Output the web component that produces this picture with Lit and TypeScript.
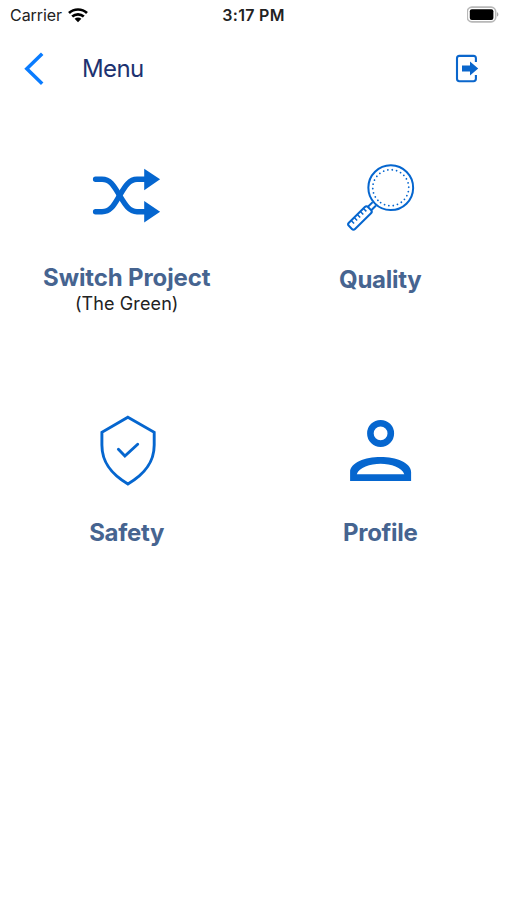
import { LitElement, html, svg, css } from "lit";
import { customElement, property } from "lit/decorators.js";

const icons: Record<string, unknown> = {
  shuffle: svg`
    <g fill="none" stroke="currentColor" stroke-width="5.4" stroke-linecap="round">
      <path d="M8.6 24.3H15C24 24.3 27.5 32 32.6 40.5S42 56.7 50 56.7H58"/>
      <path d="M8.6 56.7H15C24 56.7 27.5 49 32.6 40.5S42 24.3 50 24.3H58"/>
    </g>
    <path fill="currentColor" d="M57.2 13.7L73.1 24.3L57.2 35.3ZM57.2 46L73.1 56.7L57.2 67.5Z"/>`,
  magnifier: svg`
    <g transform="translate(50.75 32.7) rotate(135.5)" fill="none" stroke="currentColor" stroke-width="2">
      <circle r="22.4"/>
      <circle r="18" stroke-width="1.8" stroke-linecap="round" stroke-dasharray="0 4.35"/>
      <path d="M23 -2.4H30M23 2.4H30"/>
      <rect x="29.8" y="-4.4" width="26.8" height="8.8" rx="2.2"/>
      <path stroke-width="1.5" d="M34 4V0.2M38.3 4V0.2M42.6 4V0.2M46.9 4V0.2M51.2 4V0.2"/>
    </g>`,
  shield: svg`
    <g fill="none" stroke="currentColor" stroke-width="2.9" stroke-linecap="round">
      <path d="M40.9 7.2L67.2 22.3V35C67.2 53 57 64.5 40.9 74C24.8 64.5 14.9 53 14.9 35V22.3Z"/>
      <path d="M31.4 39.2L37.9 46L50.7 34.2"/>
    </g>`,
  person: svg`
    <circle cx="40.6" cy="23.4" r="10.2" fill="none" stroke="currentColor" stroke-width="6.6"/>
    <path fill="currentColor" fill-rule="evenodd" d="M10.1 71V62C10.1 52.5 25 46.9 40.6 46.9S71.1 52.5 71.1 62V71ZM16.8 64.2H64.3C62 57.5 51 53.8 40.6 53.8S19 57.5 16.8 64.2Z"/>`,
};

@customElement("status-bar")
class StatusBar extends LitElement {
  static styles = css`
    :host { display: grid; grid-template-columns: 1fr auto 1fr; align-items: center; height: 30px; padding: 0 8px 0 10px; box-sizing: border-box; color: #222; font-size: 16px; line-height: 30px; }
    .left { display: flex; align-items: center; gap: 6px; }
    .carrier { letter-spacing: -0.05px; }
    .time { margin-right: 2px; font-weight: 600; letter-spacing: 0.3px; }
    .battery { justify-self: end; }
    svg { display: block; }
  `;
  render() {
    return html`
      <div class="left">
        <span class="carrier">Carrier</span>
        <svg width="20" height="15" viewBox="0 0 20 15" fill="none" stroke="#000" stroke-width="2.7">
          <path d="M1 5C6 .3 14 .3 19 5M4.2 8.5C7.5 5.6 12.5 5.6 15.8 8.5"/>
          <path fill="#000" stroke="none" d="M6.6 10.8C8.5 9.1 11.5 9.1 13.4 10.8L10 14.2Z"/>
        </svg>
      </div>
      <span class="time">3:17 PM</span>
      <svg class="battery" width="32" height="18" viewBox="0 0 32 18">
        <rect x=".3" y="1.1" width="28.4" height="14.8" rx="4.6" fill="#fff" stroke="#b8b8b8" stroke-width="1.6"/>
        <rect x="2.8" y="3.3" width="23.6" height="10.6" rx="2" fill="#000"/>
        <path d="M30 6.2C31.8 6.8 31.8 10 30 10.6Z" fill="#aaa"/>
      </svg>`;
  }
}

@customElement("nav-header")
class NavHeader extends LitElement {
  static styles = css`
    :host { display: flex; align-items: center; height: 77px; padding: 0 28px 0 22px; box-sizing: border-box; }
    .title { flex: 1; margin-left: 36px; color: #1d3270; font-size: 24px; line-height: 32px; letter-spacing: -0.6px; }
    svg { display: block; }
  `;
  render() {
    return html`
      <svg width="24" height="36" viewBox="0 0 24 36" fill="none" stroke="#0a7cff" stroke-width="3.5">
        <path d="M20.2 2.8L4.8 17.8L20.2 32.8"/>
      </svg>
      <span class="title">Menu</span>
      <svg width="26" height="32" viewBox="0 0 26 32">
        <path fill="none" stroke="#0a66cc" stroke-width="2.1" d="M22.9 8.9V5.3Q22.9 2.9 20.5 2.9H6.4Q4 2.9 4 5.3V25.8Q4 28.2 6.4 28.2H20.5Q22.9 28.2 22.9 25.8V22"/>
        <path fill="#0a66cc" d="M9 12.6H17V8.6L25.2 15.5L17 22.4V18.4H9Z"/>
      </svg>`;
  }
}

@customElement("menu-tile")
class MenuTile extends LitElement {
  @property() icon = "";
  @property() label = "";
  @property() note = "";
  static styles = css`
    :host { display: flex; flex-direction: column; align-items: center; }
    svg { display: block; color: #0566cf; }
    .label { margin-top: var(--label-gap, 30px); color: #466490; font-size: 24px; font-weight: 700; line-height: 30px; letter-spacing: -0.27px; }
    .noted { margin-top: 28px; letter-spacing: -0.12px; }
    .note { margin-top: -1px; color: #222; font-size: 18px; line-height: 24px; letter-spacing: 0.1px; }
  `;
  render() {
    return html`
      <svg width="80" height="80" viewBox="0 0 80 80">${icons[this.icon]}</svg>
      <span class="label ${this.note ? "noted" : ""}">${this.label}</span>
      ${this.note ? html`<span class="note">${this.note}</span>` : ""}`;
  }
}

@customElement("app-root")
class AppRoot extends LitElement {
  static styles = css`
    :host { display: block; height: 900px; background: #fff; font-family: Inter, "Liberation Sans", sans-serif; }
    .grid { display: grid; grid-template-columns: 1fr 1fr; grid-auto-rows: 255px; padding-top: 48px; }
    .low { --label-gap: 28px; }
  `;
  render() {
    return html`
      <status-bar></status-bar>
      <nav-header></nav-header>
      <main class="grid">
        <menu-tile icon="shuffle" label="Switch Project" note="(The Green)"></menu-tile>
        <menu-tile icon="magnifier" label="Quality"></menu-tile>
        <menu-tile class="low" icon="shield" label="Safety"></menu-tile>
        <menu-tile class="low" icon="person" label="Profile"></menu-tile>
      </main>`;
  }
}
